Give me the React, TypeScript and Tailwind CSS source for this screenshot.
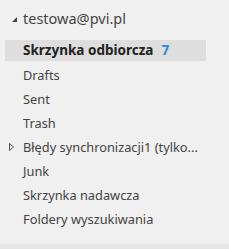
import React from 'react';

const folders = [
  { name: 'Drafts' },
  { name: 'Sent' },
  { name: 'Trash' },
  { name: 'Błędy synchronizacji1 (tylko...', expandable: true },
  { name: 'Junk' },
  { name: 'Skrzynka nadawcza' },
  { name: 'Foldery wyszukiwania' },
];

export default function App() {
  return (
    <div
      className="flex h-[249px] w-[229px] flex-col overflow-hidden bg-[#f0f0f0] text-[#444]"
      style={{ fontFamily: '"Noto Sans", "Open Sans", sans-serif' }}
    >
      <div className="flex-1">
        {/* account */}
        <div className="flex h-[40px] items-center pb-[3px] pl-[12px]">
          <svg width="5" height="5" viewBox="0 0 5 5" className="mr-[6px] mt-[2px]">
            <polygon points="5,0 5,5 0,5" fill="#444" />
          </svg>
          <span className="text-[14.5px] leading-none">testowa@pvi.pl</span>
        </div>

        {/* selected inbox */}
        <div className="mx-[5px] flex h-[21px] w-[201px] items-center bg-[#dedede] pl-[18px]">
          <span className="text-[13.5px] font-bold leading-none text-[#222]">Skrzynka odbiorcza</span>
          <span className="ml-[8px] text-[13.5px] font-bold leading-none text-[#2b88d8]">7</span>
        </div>

        <div className="mt-[2px] flex flex-col">
          {folders.map((f) => (
            <div key={f.name} className="flex h-[24px] items-center">
              <div className="flex w-[23px] justify-end pr-[9px]">
                {f.expandable && (
                  <svg width="5" height="8" viewBox="0 0 5 8">
                    <polygon points="0.5,0.5 4.5,4 0.5,7.5" fill="none" stroke="#555" strokeWidth="1" />
                  </svg>
                )}
              </div>
              <span className="whitespace-nowrap text-[12.8px] leading-none">{f.name}</span>
            </div>
          ))}
        </div>
      </div>
      <div className="h-[5px] bg-[#e6e6e6]" />
    </div>
  );
}
